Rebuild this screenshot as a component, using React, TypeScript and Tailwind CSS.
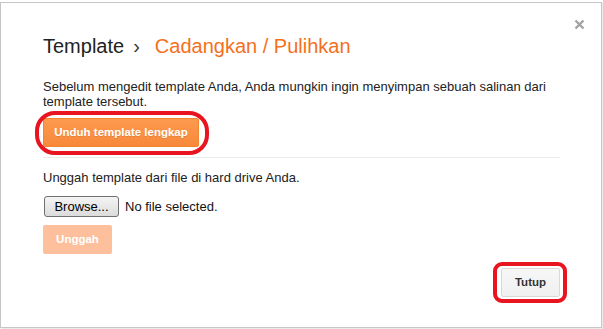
import React from 'react';

const font = { fontFamily: '"Liberation Sans", Arial, sans-serif' };

export default function App() {
  return (
    <div className="w-[603px] h-[329px] bg-white overflow-hidden" style={font}>
      <div className="relative mt-[2px] w-[602px] h-[326px] border border-[#c6c6c6] shadow-[1px_1px_1px_rgba(0,0,0,0.08)] bg-white pl-[42px] pr-[41px] pt-[31px] flex flex-col">
        {/* close */}
        <button className="absolute right-[15px] top-[15px] w-[13px] h-[13px] flex items-center justify-center">
          <svg width="11" height="11" viewBox="0 0 11 11">
            <path d="M1.5 1.5 L9.5 9.5 M9.5 1.5 L1.5 9.5" stroke="#a3a3a3" strokeWidth="2.4" strokeLinecap="butt" />
          </svg>
        </button>

        {/* Title */}
        <h1 className="text-[20px] leading-[24px] text-[#222] flex items-baseline whitespace-nowrap">
          <span>Template</span>
          <span className="ml-[9px] mr-[15px] text-[#333]">›</span>
          <span className="text-[#f56f1c]">Cadangkan / Pulihkan</span>
        </h1>

        <p className="mt-[21px] text-[13px] leading-[15px] text-[#222]">
          Sebelum mengedit template Anda, Anda mungkin ingin menyimpan sebuah salinan dari
          <br />
          template tersebut.
        </p>

        {/* Download button with highlight */}
        <div className="relative mt-[9px] self-start">
          <button className="h-[29px] w-[156px] rounded-[2px] border border-[#f3852f] bg-gradient-to-b from-[#fc9a4d] to-[#f7883a] text-white font-bold text-[11.5px] [text-shadow:0_1px_0_rgba(0,0,0,0.1)]">
            Unduh template lengkap
          </button>
          <div className="absolute left-[-8px] top-[-7px] w-[174px] h-[44px] rounded-[20px] border-[4px] border-[#e8141f] pointer-events-none" />
        </div>

        <div className="mt-[10px] h-px bg-[#ebebeb]" />

        <p className="mt-[12px] text-[13px] leading-[15px] text-[#222]">
          Unggah template dari file di hard drive Anda.
        </p>

        <div className="mt-[11px] flex items-center">
          <button className="ml-[1px] w-[75px] h-[21px] rounded-[3px] border border-[#707070] bg-gradient-to-b from-[#f4f4f4] to-[#dcdcdc] text-[13px] text-black leading-none">
            Browse...
          </button>
          <span className="ml-[6px] text-[13px] text-[#111]">No file selected.</span>
        </div>

        <button className="mt-[8px] self-start w-[69px] h-[29px] rounded-[2px] bg-[#fdbf9c] text-white font-bold text-[11.5px]">
          Unggah
        </button>

        {/* Footer */}
        <div className="mt-[14px] flex justify-end">
          <div className="relative">
            <button className="w-[59px] h-[29px] rounded-[2px] border border-[#d9d9d9] bg-gradient-to-b from-[#f7f7f7] to-[#f0f0f0] text-[#333] font-bold text-[11.5px]">
              Tutup
            </button>
            <div className="absolute left-[-8px] top-[-6px] w-[74px] h-[41px] rounded-[9px] border-[4px] border-[#e8141f] pointer-events-none" />
          </div>
        </div>
      </div>
    </div>
  );
}
